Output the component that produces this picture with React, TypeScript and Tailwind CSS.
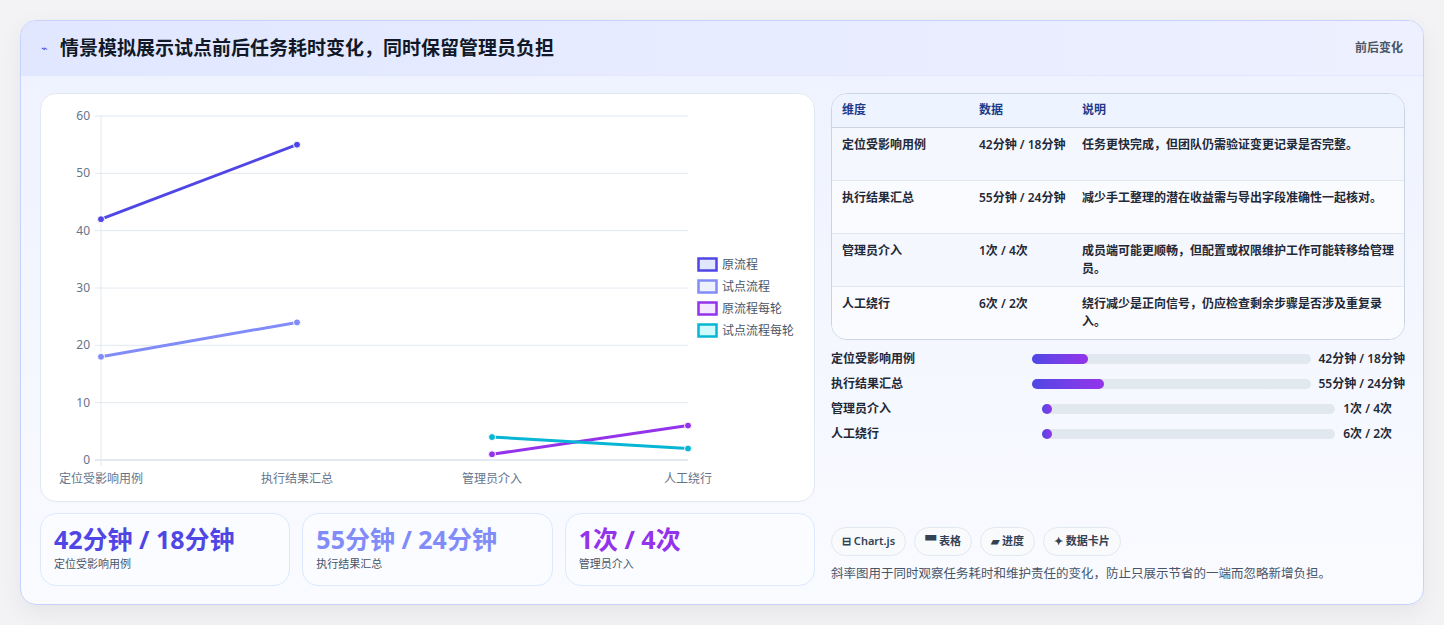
const F = { fontFamily: '"Noto Sans", "Noto Sans CJK SC", sans-serif' };

const rows = [
  ["定位受影响用例", "42分钟 / 18分钟", "任务更快完成，但团队仍需验证变更记录是否完整。"],
  ["执行结果汇总", "55分钟 / 24分钟", "减少手工整理的潜在收益需与导出字段准确性一起核对。"],
  ["管理员介入", "1次 / 4次", "成员端可能更顺畅，但配置或权限维护工作可能转移给管理员。"],
  ["人工绕行", "6次 / 2次", "绕行减少是正向信号，仍应检查剩余步骤是否涉及重复录入。"],
];

const bars = [
  { label: "定位受影响用例", value: "42分钟 / 18分钟", pct: 20, wide: true },
  { label: "执行结果汇总", value: "55分钟 / 24分钟", pct: 26, wide: true },
  { label: "管理员介入", value: "1次 / 4次", pct: 3.5, wide: false },
  { label: "人工绕行", value: "6次 / 2次", pct: 3.5, wide: false },
];

function Chart() {
  const y = (v: number) => 459 - v * (344 / 60);
  const xs = [100, 296, 491, 687];
  const series = [
    { c: "#4f46e5", pts: [[0, 42], [1, 55]] },
    { c: "#818cf8", pts: [[0, 18], [1, 24]] },
    { c: "#9333ea", pts: [[2, 1], [3, 6]] },
    { c: "#06b6d4", pts: [[2, 4], [3, 2]] },
  ];
  const legend = [
    ["原流程", "#4f46e5", "#e0e7ff"],
    ["试点流程", "#818cf8", "#eef2ff"],
    ["原流程每轮", "#9333ea", "#f3e8ff"],
    ["试点流程每轮", "#06b6d4", "#cffafe"],
  ];
  return (
    <svg width="775" height="408" style={F}>
      <g transform="translate(-40,-93)">
        {[0, 10, 20, 30, 40, 50, 60].map((v) => (
          <g key={v}>
            <line x1="94" x2="687" y1={y(v)} y2={y(v)} stroke={v === 0 ? "#cbd5e1" : "#e2e8f0"} />
            <text x="89" y={y(v) + 4} textAnchor="end" fontSize="12" fill="#64748b">{v}</text>
          </g>
        ))}
        <line x1="100" x2="100" y1="115" y2="465" stroke="#e2e8f0" />
        {["定位受影响用例", "执行结果汇总", "管理员介入", "人工绕行"].map((t, i) => (
          <text key={t} x={xs[i]} y="482" textAnchor="middle" fontSize="12" fill="#64748b">{t}</text>
        ))}
        {series.map((s, i) => (
          <g key={i}>
            <line x1={xs[s.pts[0][0]]} y1={y(s.pts[0][1])} x2={xs[s.pts[1][0]]} y2={y(s.pts[1][1])} stroke={s.c} strokeWidth="3" />
            {s.pts.map(([xi, v], j) => (
              <circle key={j} cx={xs[xi]} cy={y(v)} r="3.5" fill={s.c} stroke="#fff" strokeWidth="1" />
            ))}
          </g>
        ))}
        {legend.map(([t, c, f], i) => (
          <g key={t}>
            <rect x="697.5" y={257.5 + i * 22} width="18" height="12" fill={f} stroke={c} strokeWidth="2.5" />
            <text x="721" y={268 + i * 22} fontSize="12" fill="#475569">{t}</text>
          </g>
        ))}
      </g>
    </svg>
  );
}

export default function App() {
  return (
    <div className="h-[625px] w-[1444px] bg-[#f3f3f5] pt-5 pl-5" style={F}>
      <div className="w-[1404px] h-[585px] overflow-hidden rounded-2xl border border-[#c7d2fe] bg-gradient-to-b from-[#eef2ff] to-[#fafbff] shadow-[0_8px_24px_rgba(0,0,0,0.06)]">
        <div className="flex h-[55px] items-center justify-between border-b border-[#e0e7ff] bg-gradient-to-r from-[#e0e7ff] to-[#eef0ff] px-5">
          <div className="flex items-center gap-3">
            <span className="text-[11px] text-[#4f46e5]">⌁</span>
            <h1 className="text-[19px] font-bold text-[#111827]">情景模拟展示试点前后任务耗时变化，同时保留管理员负担</h1>
          </div>
          <span className="text-xs font-semibold text-[#4b5563]">前后变化</span>
        </div>
        <div className="flex gap-4 pl-[19px] pt-[17px]">
          <div className="w-[775px]">
            <div className="h-[409px] overflow-hidden rounded-2xl border border-[#e2e8f0] bg-white">
              <Chart />
            </div>
            <div className="mt-[11px] grid grid-cols-3 gap-3">
              {[
                ["42分钟 / 18分钟", "text-[#4f46e5]", "定位受影响用例"],
                ["55分钟 / 24分钟", "text-[#818cf8]", "执行结果汇总"],
                ["1次 / 4次", "text-[#9333ea]", "管理员介入"],
              ].map(([v, c, l]) => (
                <div key={l} className="h-[73px] rounded-2xl border border-[#dbeafe] bg-[#fafcff] px-[13px] pt-[8px]">
                  <div className={`text-[25px] font-bold leading-[34px] ${c}`}>{v}</div>
                  <div className="text-[11px] text-[#475569]">{l}</div>
                </div>
              ))}
            </div>
          </div>
          <div className="flex w-[574px] flex-col">
            <div className="overflow-hidden rounded-2xl border border-[#cbd5e1] bg-white">
              <table className="w-full table-fixed text-[12px] font-semibold text-[#1f2937]">
                <thead>
                  <tr className="h-[33px] border-b border-[#cbd5e1] bg-[#eef4ff] text-left text-[#1e3a8a]">
                    <th className="w-[147px] pl-[10px] font-semibold">维度</th>
                    <th className="w-[103px] font-semibold">数据</th>
                    <th className="font-semibold">说明</th>
                  </tr>
                </thead>
                <tbody>
                  {rows.map((r, i) => (
                    <tr key={r[0]} className={`h-[53px] align-top ${i < 3 ? "border-b border-[#e2e8f0]" : ""} ${i % 2 === 0 ? "bg-[#f5f7ff]" : "bg-[#fafbff]"}`}>
                      <td className="pl-[10px] pt-[8px]">{r[0]}</td>
                      <td className="pt-[8px] pr-3 leading-[18px]">{r[1]}</td>
                      <td className="pt-[8px] pr-2 leading-[18px]">{r[2]}</td>
                    </tr>
                  ))}
                </tbody>
              </table>
            </div>
            <div className="mt-[10px] flex flex-col gap-[7px]">
              {bars.map((b) => (
                <div key={b.label} className="flex h-[18px] items-center text-[12px] font-semibold text-[#1f2937]">
                  <span className={b.wide ? "w-[201px]" : "w-[211px]"}>{b.label}</span>
                  <div className="h-[10px] flex-1 rounded-full bg-[#e2e8f0]">
                    <div className="h-full rounded-full bg-gradient-to-r from-[#4f46e5] to-[#9333ea]" style={{ width: `${b.pct}%`, minWidth: 10 }} />
                  </div>
                  <span className={b.wide ? "ml-2" : "ml-2 mr-[13px]"}>{b.value}</span>
                </div>
              ))}
            </div>
            <div className="mt-[84px] flex gap-2">
              {["⊟ Chart.js", "▀ 表格", "▰ 进度", "✦ 数据卡片"].map((t) => (
                <span key={t} className="flex h-[29px] items-center rounded-full border border-[#e2e8f0] bg-[#f8fafc] px-[10px] text-[11px] font-semibold text-[#334155]">{t}</span>
              ))}
            </div>
            <p className="mt-[9px] text-[12.5px] text-[#475569]">斜率图用于同时观察任务耗时和维护责任的变化，防止只展示节省的一端而忽略新增负担。</p>
          </div>
        </div>
      </div>
    </div>
  );
}
